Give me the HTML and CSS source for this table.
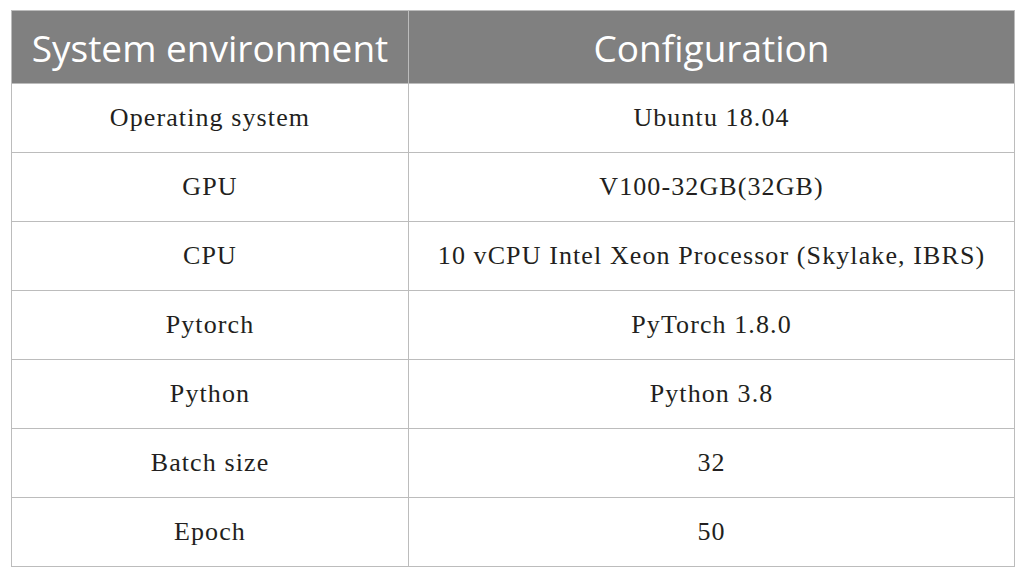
FILE: index.html
```html
<!DOCTYPE html>
<html>
<head>
<meta charset="utf-8">
<link rel="stylesheet" href="styles.css">
</head>
<body>
<table class="spec">
  <thead>
    <tr><th class="c1">System environment</th><th class="c2">Configuration</th></tr>
  </thead>
  <tbody>
    <tr><td>Operating system</td><td>Ubuntu 18.04</td></tr>
    <tr><td>GPU</td><td>V100-32GB(32GB)</td></tr>
    <tr><td>CPU</td><td>10 vCPU Intel Xeon Processor (Skylake, IBRS)</td></tr>
    <tr><td>Pytorch</td><td>PyTorch 1.8.0</td></tr>
    <tr><td>Python</td><td>Python 3.8</td></tr>
    <tr><td>Batch size</td><td>32</td></tr>
    <tr><td>Epoch</td><td>50</td></tr>
  </tbody>
</table>
</body>
</html>
```

FILE: styles.css
```css
html, body {
  margin: 0;
  padding: 0;
  background: #ffffff;
}
body {
  padding: 10px 10px 0 11px;
}
.spec {
  border-collapse: collapse;
  width: 1004px;
  table-layout: fixed;
}
.spec th, .spec td {
  border: 1.5px solid #bcbcbc;
  text-align: center;
  padding: 0;
}
.spec th {
  background: #808080;
  color: #ffffff;
  font-family: "Open Sans", Lato, sans-serif;
  font-weight: 400;
  font-size: 37px;
  height: 72px;
}
.spec .c1 { width: 396px; }
.spec td {
  font-family: "Liberation Serif", "DejaVu Serif", serif;
  font-size: 26px;
  letter-spacing: 1.1px;
  color: #231f20;
  height: 68px;
}
```
